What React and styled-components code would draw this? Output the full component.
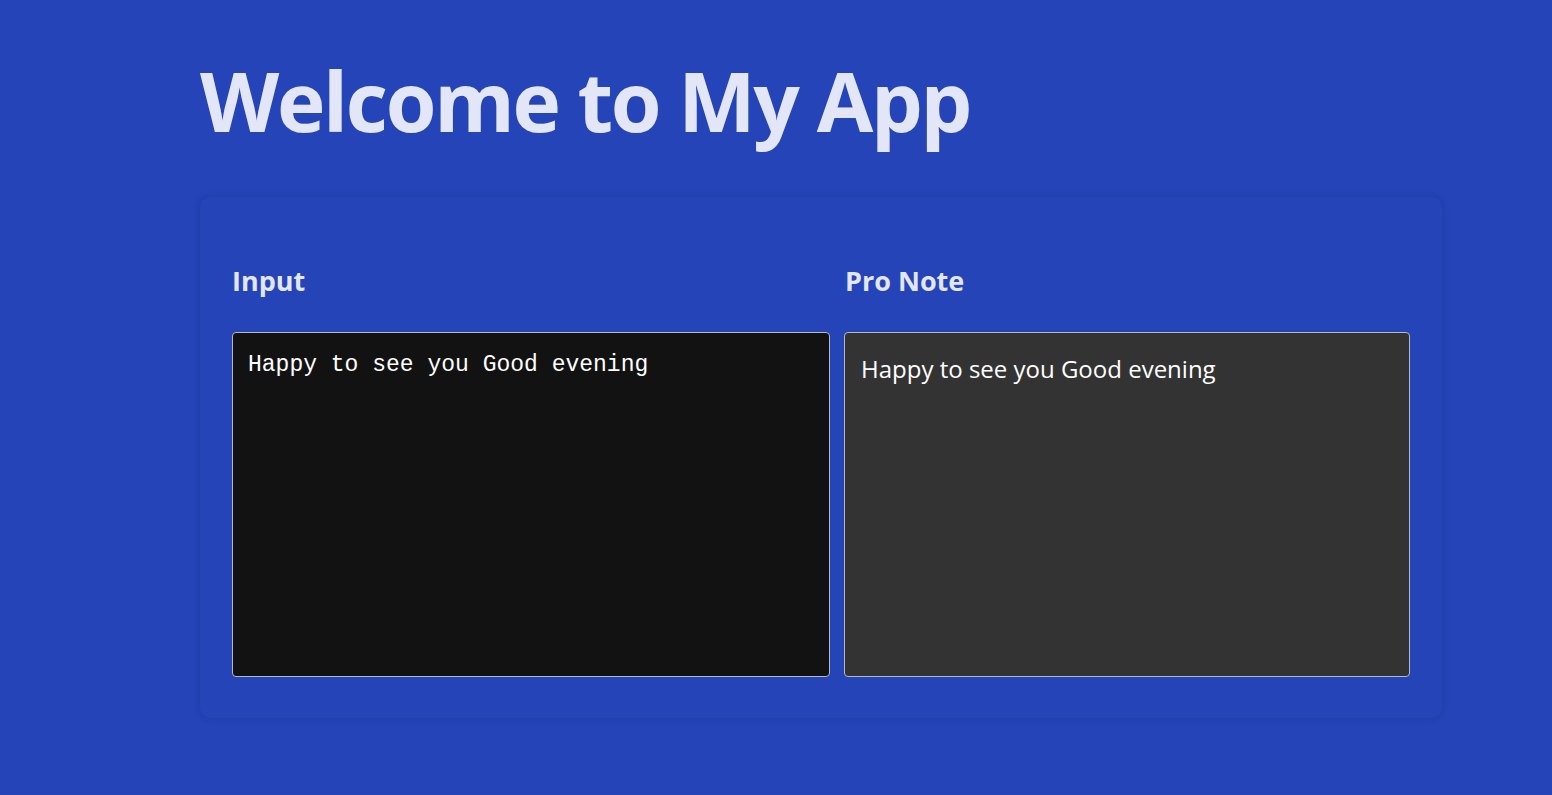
import React from "react";
import styled, { createGlobalStyle } from "styled-components";

const Global = createGlobalStyle`
  html, body { margin: 0; padding: 0; background: #2444b8; }
  body { font-family: "Open Sans", "Noto Sans", sans-serif; }
`;

const Page = styled.div`
  min-height: 795px;
  background: #2444b8;
  padding: 0 0 0 200px;
  box-sizing: border-box;
`;

const Title = styled.h1`
  margin: 0;
  padding-top: 50px;
  height: 197px;
  box-sizing: border-box;
  font-family: "Open Sans", sans-serif;
  font-weight: 700;
  font-size: 82px;
  line-height: 100px;
  letter-spacing: -2.3px;
  color: #e3e6f7;
`;

const Card = styled.div`
  width: 1242px;
  box-sizing: border-box;
  border-radius: 10px;
  padding: 64px 32px 41px 32px;
  background: #2444b8;
  box-shadow: 0 0 6px rgba(20, 30, 90, 0.25);
  display: grid;
  grid-template-columns: 598px 566px;
  column-gap: 14px;
`;

const Column = styled.div`
  display: flex;
  flex-direction: column;
`;

const Label = styled.div`
  font-family: "Open Sans", sans-serif;
  font-weight: 700;
  font-size: 27px;
  line-height: 40px;
  color: #e3e6f7;
  margin-left: ${(p) => p.$shift || 0}px;
  margin-bottom: 31px;
`;

const Box = styled.div`
  height: 345px;
  box-sizing: border-box;
  border: 1px solid #b8b8c0;
  border-radius: 4px;
  background: ${(p) => p.$bg};
  color: #ffffff;
  padding: ${(p) => p.$pad};
  font-family: ${(p) => p.$font};
  font-size: ${(p) => p.$size}px;
  line-height: 1.4;
`;

export default function App() {
  return (
    <>
      <Global />
      <Page>
        <Title>Welcome to My App</Title>
        <Card>
          <Column>
            <Label>Input</Label>
            <Box
              $bg="#121212"
              $pad="16px 15px"
              $font={`"Liberation Mono", "DejaVu Sans Mono", monospace`}
              $size={23}
            >
              Happy to see you Good evening
            </Box>
          </Column>
          <Column>
            <Label $shift={1}>Pro Note</Label>
            <Box
              $bg="#333333"
              $pad="19px 16px"
              $font={`"Open Sans", sans-serif`}
              $size={24}
            >
              Happy to see you Good evening
            </Box>
          </Column>
        </Card>
      </Page>
    </>
  );
}
